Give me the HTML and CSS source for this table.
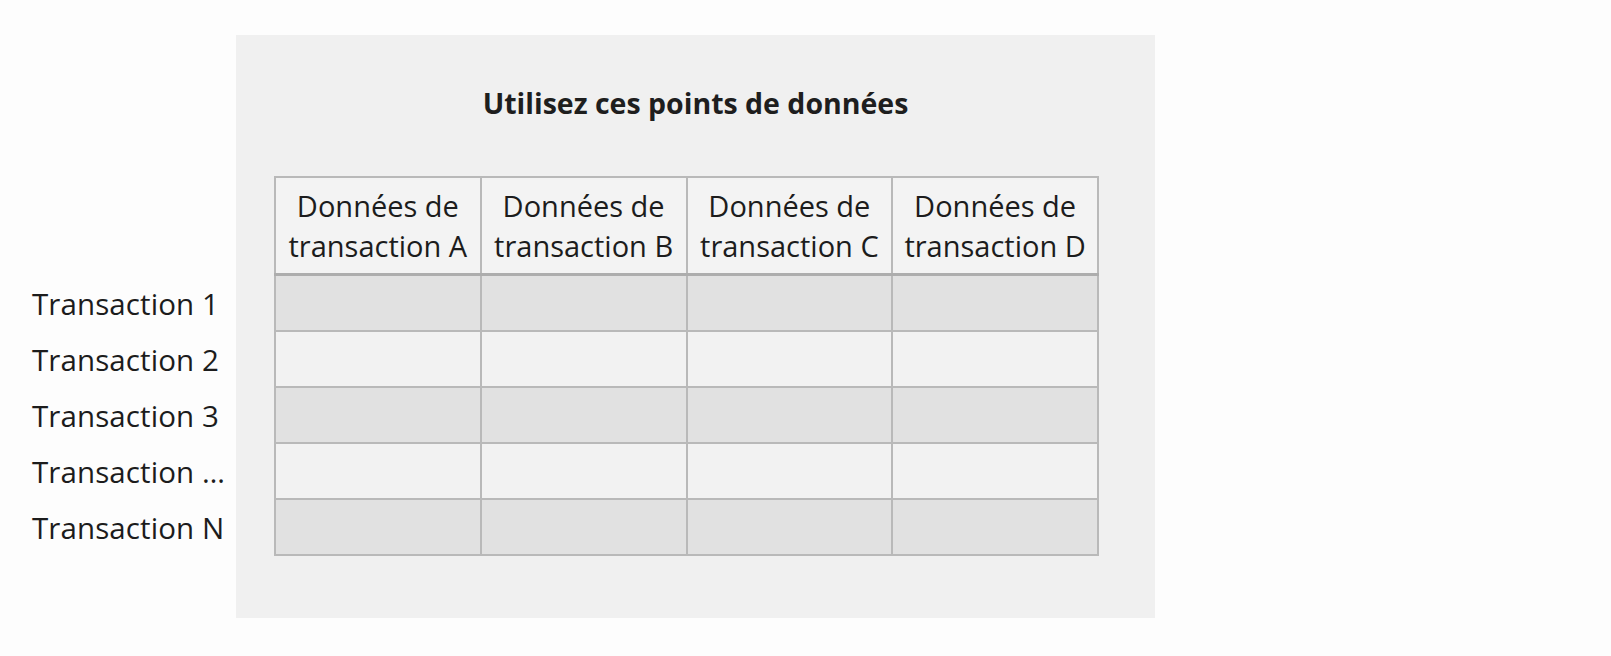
FILE: index.html
```html
<!DOCTYPE html>
<html lang="fr">
<head>
<meta charset="utf-8">
<title>Utilisez ces points de données</title>
<link rel="stylesheet" href="styles.css">
</head>
<body>
<div class="stage">
  <div class="labels">
    <div class="label">Transaction 1</div>
    <div class="label">Transaction 2</div>
    <div class="label">Transaction 3</div>
    <div class="label">Transaction …</div>
    <div class="label">Transaction N</div>
  </div>
  <div class="panel">
    <h1 class="title">Utilisez ces points de données</h1>
    <table class="grid">
      <thead>
        <tr>
          <th>Données de<br>transaction A</th>
          <th>Données de<br>transaction B</th>
          <th>Données de<br>transaction C</th>
          <th>Données de<br>transaction D</th>
        </tr>
      </thead>
      <tbody>
        <tr class="dark"><td></td><td></td><td></td><td></td></tr>
        <tr class="light"><td></td><td></td><td></td><td></td></tr>
        <tr class="dark"><td></td><td></td><td></td><td></td></tr>
        <tr class="light"><td></td><td></td><td></td><td></td></tr>
        <tr class="dark"><td></td><td></td><td></td><td></td></tr>
      </tbody>
    </table>
  </div>
</div>
</body>
</html>
```

FILE: styles.css
```css
html, body {
  margin: 0;
  padding: 0;
}
body {
  background: #fdfdfd;
  color: #1c1c1c;
  font-family: "Open Sans", "Noto Sans", sans-serif;
  width: 1611px;
  height: 656px;
  overflow: hidden;
}
.stage {
  display: flex;
  padding-top: 35px;
}
.labels {
  width: 236px;
  box-sizing: border-box;
  padding: 240px 0 0 32px;
  display: flex;
  flex-direction: column;
}
.label {
  height: 56.2px;
  display: flex;
  align-items: center;
  font-size: 29.5px;
  white-space: nowrap;
  letter-spacing: 0.1px;
}
.panel {
  width: 919px;
  height: 583px;
  background: #f0f0f0;
  box-sizing: border-box;
  padding-top: 49px;
}
.title {
  margin: 0;
  text-align: center;
  font-size: 28.5px;
  font-weight: 700;
  line-height: 38px;
  color: #1e1e1e;
}
.grid {
  margin: 54px 0 0 38px;
  border-collapse: collapse;
  table-layout: fixed;
  width: 825px;
}
.grid th, .grid td {
  border: 2px solid #b9b9b9;
  padding: 0;
}
.grid th {
  height: 95px;
  background: #f3f3f3;
  font-weight: 400;
  font-size: 29px;
  line-height: 40px;
  text-align: center;
  color: #1c1c1c;
}
.grid thead th {
  border-bottom: 3px solid #adadad;
}
.grid td {
  height: 54px;
}
.grid .dark td {
  background: #e1e1e1;
}
.grid .light td {
  background: #f2f2f2;
}
```
